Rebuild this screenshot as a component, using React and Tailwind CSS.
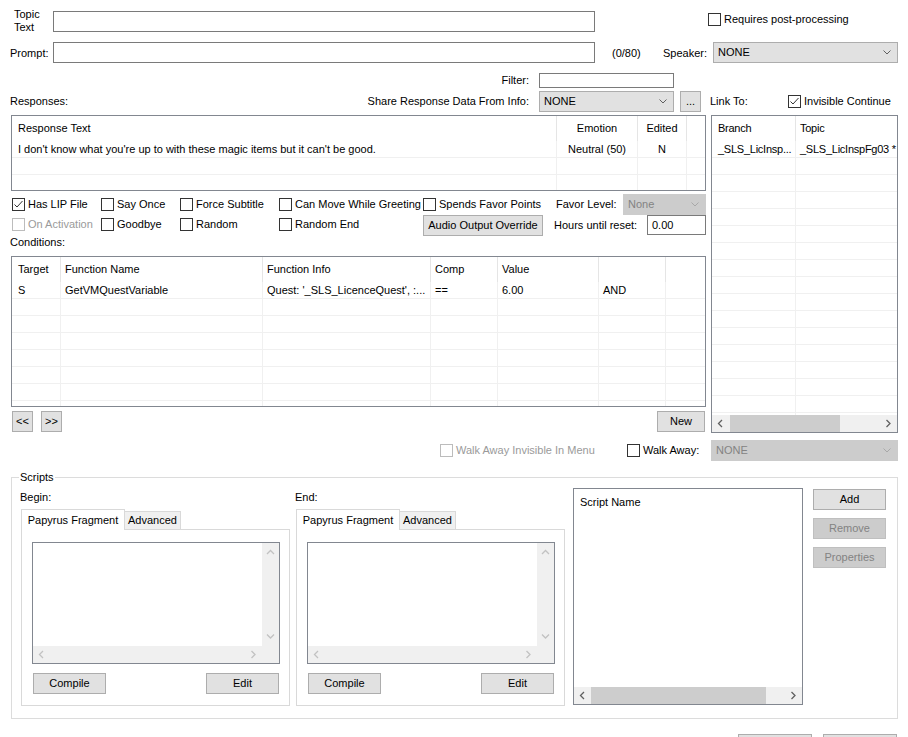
import React from 'react';

const Chevron = ({ color = '#606060' }) => (
  <svg width="8" height="5" viewBox="0 0 8 5" className="shrink-0">
    <path d="M0.5 0.5 L4 4 L7.5 0.5" fill="none" stroke={color} strokeWidth="1" />
  </svg>
);

const Arrow = ({ dir, color = '#c2c2c2' }) => {
  const paths = {
    up: 'M1 5 L4.5 1.5 L8 5',
    down: 'M1 1.5 L4.5 5 L8 1.5',
    left: 'M5 1 L1.5 4.5 L5 8',
    right: 'M1.5 1 L5 4.5 L1.5 8',
  };
  const vertical = dir === 'up' || dir === 'down';
  return (
    <svg width={vertical ? 9 : 7} height={vertical ? 7 : 9} viewBox={vertical ? '0 0 9 7' : '0 0 7 9'} className="shrink-0">
      <path d={paths[dir]} fill="none" stroke={color} strokeWidth="1.3" />
    </svg>
  );
};

function Check({ checked, disabled }) {
  return (
    <span
      className={`w-[13px] h-[13px] shrink-0 border bg-white flex items-center justify-center ${
        disabled ? 'border-[#bcbcbc]' : 'border-[#333333]'
      }`}
    >
      {checked && (
        <svg width="11" height="11" viewBox="0 0 11 11">
          <path d="M1.5 5.5 L4 8 L9.5 2" fill="none" stroke="#333333" strokeWidth="1" />
        </svg>
      )}
    </span>
  );
}

function CheckItem({ label, checked, disabled, className = '' }) {
  return (
    <div className={`flex items-center shrink-0 ${className}`}>
      <Check checked={checked} disabled={disabled} />
      <span className={`ml-[3px] whitespace-nowrap ${disabled ? 'text-[#9a9a9a]' : ''}`}>{label}</span>
    </div>
  );
}

function Button({ children, disabled, className = '' }) {
  return (
    <div
      className={`h-[21px] shrink-0 border flex items-center justify-center whitespace-nowrap ${
        disabled ? 'border-[#bfbfbf] bg-[#cccccc] text-[#838383]' : 'border-[#adadad] bg-[#e1e1e1]'
      } ${className}`}
    >
      {children}
    </div>
  );
}

function Combo({ value, disabled, className = '' }) {
  return (
    <div
      className={`h-[21px] shrink-0 border flex items-center justify-between pl-[4px] pr-[6px] ${
        disabled ? 'border-[#cccccc] bg-[#cccccc] text-[#838383]' : 'border-[#adadad] bg-[#e1e1e1]'
      } ${className}`}
    >
      <span>{value}</span>
      <Chevron color={disabled ? '#a8a8a8' : '#606060'} />
    </div>
  );
}

// list view with grid lines; columns give width, alignment and padding
function ListView({ columns, rows, rowCount, className = '', children }) {
  const blank = Array.from({ length: rowCount - rows.length });
  return (
    <div className={`border border-[#828790] bg-white flex flex-col overflow-hidden ${className}`}>
      <div className="flex-1 overflow-hidden">
        <div className="flex h-[25px]">
          {columns.map((c, i) => (
            <div
              key={i}
              className={`${c.w} ${c.pad || 'px-[6px]'} shrink-0 flex items-center whitespace-nowrap ${
                c.center ? 'justify-center' : ''
              } ${c.last ? '' : 'border-r border-[#e5e5e5]'}`}
            >
              {c.label}
            </div>
          ))}
        </div>
        {rows.concat(blank.map(() => null)).map((r, ri) => (
          <div key={ri} className="flex h-[17px] border-b border-[#f0f0f0]">
            {columns.map((c, i) => (
              <div
                key={i}
                className={`${c.w} ${c.pad || 'px-[6px]'} shrink-0 flex items-center whitespace-nowrap overflow-hidden ${
                  c.center ? 'justify-center' : ''
                } ${c.last ? '' : 'border-r border-[#f0f0f0]'}`}
              >
                {r ? r[i] : ''}
              </div>
            ))}
          </div>
        ))}
      </div>
      {children}
    </div>
  );
}

function HScroll({ thumb }) {
  return (
    <div className="h-[17px] shrink-0 bg-[#f0f0f0] flex items-center px-[5px]">
      <Arrow dir="left" color="#606060" />
      <div className="flex-1 h-full flex items-center px-[6px]">{thumb}</div>
      <Arrow dir="right" color="#606060" />
    </div>
  );
}

function ScriptPane({ label }) {
  return (
    <div className="flex flex-col shrink-0">
      <div className="h-[13px] leading-[13px]">{label}</div>
      <div className="ml-[1px] mt-[5px] w-[269px]">
        <div className="flex items-end h-[21px]">
          <div className="h-[21px] w-[104px] border border-b-0 border-[#d9d9d9] bg-white flex items-center justify-center">
            Papyrus Fragment
          </div>
          <div className="h-[19px] w-[56px] border border-l-0 border-[#d9d9d9] bg-[#f0f0f0] flex items-center justify-center">
            Advanced
          </div>
          <div className="flex-1 h-[21px] border-b border-[#d9d9d9]" />
        </div>
        <div className="h-[176px] border border-t-0 border-[#d9d9d9] pl-[10px] pt-[12px]">
          <div className="w-[248px] h-[122px] border border-[#828790] flex flex-col">
            <div className="flex flex-1">
              <div className="flex-1 bg-white" />
              <div className="w-[17px] bg-[#f0f0f0] flex flex-col items-center justify-between py-[6px]">
                <Arrow dir="up" />
                <Arrow dir="down" />
              </div>
            </div>
            <div className="h-[17px] bg-[#f0f0f0] flex items-center justify-between pl-[5px] pr-[22px]">
              <Arrow dir="left" />
              <Arrow dir="right" />
            </div>
          </div>
          <div className="flex mt-[9px] ml-[1px] w-[246px] justify-between">
            <Button className="w-[73px]">Compile</Button>
            <Button className="w-[73px]">Edit</Button>
          </div>
        </div>
      </div>
    </div>
  );
}

export default function App() {
  const respCols = [
    { label: 'Response Text', w: 'w-[545px]' },
    { label: 'Emotion', w: 'w-[81px]', center: true },
    { label: 'Edited', w: 'w-[49px]', center: true },
    { label: '', w: 'flex-1', last: true },
  ];
  const condCols = [
    { label: 'Target', w: 'w-[49px]' },
    { label: 'Function Name', w: 'w-[202px]', pad: 'pl-[4px] pr-[6px]' },
    { label: 'Function Info', w: 'w-[168px]', pad: 'pl-[4px] pr-[6px]' },
    { label: 'Comp', w: 'w-[67px]', pad: 'pl-[4px] pr-[6px]' },
    { label: 'Value', w: 'w-[101px]', pad: 'pl-[4px] pr-[6px]' },
    { label: '', w: 'w-[67px]', pad: 'pl-[4px] pr-[6px]' },
    { label: '', w: 'flex-1', last: true },
  ];
  const linkCols = [
    { label: 'Branch', w: 'w-[84px]', pad: 'pl-[6px] pr-[2px]' },
    { label: 'Topic', w: 'flex-1', last: true, pad: 'pl-[4px] pr-0' },
  ];

  return (
    <div className="w-[908px] h-[737px] overflow-hidden bg-white text-black text-[11px] leading-[13px] font-['Liberation_Sans',Arial,sans-serif]">
      {/* Topic text */}
      <div className="flex items-start h-[24px] mt-[8px]">
        <div className="ml-[14px] w-[39px] leading-[13px]">
          Topic
          <br />
          Text
        </div>
        <div className="mt-[3px] w-[542px] h-[21px] border border-[#7a7a7a] bg-white" />
        <CheckItem className="ml-[113px] mt-[5px]" label="Requires post-processing" />
      </div>

      {/* Prompt */}
      <div className="flex items-center h-[21px] mt-[10px]">
        <div className="ml-[10px] w-[43px] mt-[1px]">Prompt:</div>
        <div className="w-[542px] h-[21px] border border-[#7a7a7a] bg-white" />
        <div className="ml-[17px] w-[51px] mt-[1px]">(0/80)</div>
        <div className="w-[50px] mt-[1px]">Speaker:</div>
        <Combo value="NONE" className="w-[185px]" />
      </div>

      {/* Filter */}
      <div className="flex items-center h-[15px] mt-[10px]">
        <div className="w-[529px] text-right">Filter:</div>
        <div className="ml-[10px] w-[135px] h-[15px] border border-[#7a7a7a] bg-white" />
      </div>

      {/* Responses header row */}
      <div className="flex items-center h-[21px] mt-[3px]">
        <div className="w-[529px] flex justify-between pl-[10px]">
          <span>Responses:</span>
          <span>Share Response Data From Info:</span>
        </div>
        <Combo value="NONE" className="ml-[10px] w-[135px]" />
        <Button className="ml-[6px] w-[21px] h-[19px] items-end pb-[3px]">...</Button>
        <div className="ml-[9px] w-[78px]">Link To:</div>
        <CheckItem label="Invisible Continue" checked />
      </div>

      {/* Main area */}
      <div className="flex mt-[3px] ml-[11px]">
        <div className="w-[695px] flex flex-col">
          <ListView
            className="h-[76px]"
            columns={respCols}
            rowCount={3}
            rows={[["I don't know what you're up to with these magic items but it can't be good.", 'Neutral (50)', 'N', '']]}
          />

          <div className="flex items-center h-[20px] mt-[3px]">
            <CheckItem className="ml-[1px] w-[89px]" label="Has LIP File" checked />
            <CheckItem className="w-[79px]" label="Say Once" />
            <CheckItem className="w-[99px]" label="Force Subtitle" />
            <CheckItem className="w-[144px]" label="Can Move While Greeting" />
            <CheckItem className="w-[133px]" label="Spends Favor Points" />
            <div className="w-[67px]">Favor Level:</div>
            <Combo value="None" disabled className="w-[83px] h-[20px]" />
          </div>

          <div className="flex items-center h-[20px] mt-[1px]">
            <CheckItem className="ml-[1px] w-[89px] -mt-[2px]" label="On Activation" disabled />
            <CheckItem className="w-[79px] -mt-[2px]" label="Goodbye" />
            <CheckItem className="w-[99px] -mt-[2px]" label="Random" />
            <CheckItem className="w-[144px] -mt-[2px]" label="Random End" />
            <Button className="w-[120px] h-[16px]">Audio Output Override</Button>
            <div className="ml-[11px] w-[93px]">Hours until reset:</div>
            <div className="w-[59px] h-[20px] border border-[#7a7a7a] bg-white flex items-center pl-[4px]">0.00</div>
          </div>

          <div className="h-[13px] mt-[1px] -ml-[1px]">Conditions:</div>

          <ListView
            className="h-[151px] mt-[7px]"
            columns={condCols}
            rowCount={8}
            rows={[['S', 'GetVMQuestVariable', "Quest: '_SLS_LicenceQuest', :...", '==', '6.00', 'AND', '']]}
          />

          <div className="flex h-[21px] mt-[4px]">
            <Button className="ml-[1px] w-[21px]">&lt;&lt;</Button>
            <Button className="ml-[8px] w-[21px]">&gt;&gt;</Button>
            <Button className="ml-auto mr-[1px] w-[48px]">New</Button>
          </div>
        </div>

        <ListView
          className="ml-[5px] w-[187px] h-[318px] tracking-[-0.25px]"
          columns={linkCols}
          rowCount={17}
          rows={[['_SLS_LicInsp...', '_SLS_LicInspFg03 *']]}
        >
          <HScroll thumb={<div className="h-full w-[110px] bg-[#cdcdcd]" />} />
        </ListView>
      </div>

      {/* Walk away */}
      <div className="flex items-center h-[21px] mt-[7px]">
        <CheckItem className="ml-[440px] w-[187px]" label="Walk Away Invisible In Menu" disabled />
        <CheckItem className="w-[84px]" label="Walk Away:" />
        <Combo value="NONE" disabled className="w-[187px]" />
      </div>

      {/* Scripts group */}
      <div className="relative ml-[11px] mt-[16px] w-[887px] h-[242px] border border-[#dcdcdc] flex items-start">
        <span className="absolute left-[7px] -top-[7px] px-[1px] bg-white leading-[13px]">Scripts</span>
        <div className="ml-[8px] mt-[13px]">
          <ScriptPane label="Begin:" />
        </div>
        <div className="ml-[5px] mt-[13px]">
          <ScriptPane label="End:" />
        </div>
        <div className="ml-[8px] mt-[10px] w-[230px] h-[217px] border border-[#828790] bg-white flex flex-col">
          <div className="flex-1 pl-[6px] pt-[7px]">Script Name</div>
          <HScroll thumb={<div className="h-full w-[175px] bg-[#cdcdcd] -ml-[1px]" />} />
        </div>
        <div className="ml-[10px] mt-[11px] flex flex-col gap-[8px]">
          <Button className="w-[73px]">Add</Button>
          <Button className="w-[73px]" disabled>Remove</Button>
          <Button className="w-[73px]" disabled>Properties</Button>
        </div>
      </div>

      {/* Bottom buttons (cut off by the window edge) */}
      <div className="flex mt-[15px] ml-[738px] gap-[11px]">
        <div className="w-[74px] h-[21px] border border-[#adadad] bg-[#e1e1e1]" />
        <div className="w-[74px] h-[21px] border border-[#adadad] bg-[#e1e1e1]" />
      </div>
    </div>
  );
}
